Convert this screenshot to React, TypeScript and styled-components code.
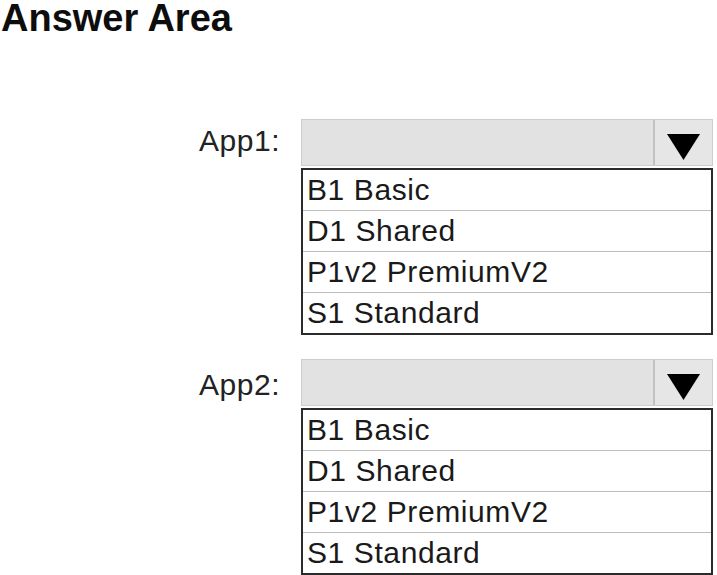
import styled, { createGlobalStyle } from 'styled-components';

const GlobalStyle = createGlobalStyle`
  html, body {
    margin: 0;
    padding: 0;
    background: #ffffff;
  }
  body {
    font-family: "Liberation Sans", Arimo, Arial, Helvetica, sans-serif;
  }
`;

const FONT = `"Liberation Sans", Arimo, Arial, Helvetica, sans-serif`;

const apps = [
  { name: 'App1', labelOffset: -2 },
  { name: 'App2', labelOffset: 2 },
];

const tiers = ['B1 Basic', 'D1 Shared', 'P1v2 PremiumV2', 'S1 Standard'];

function Caret() {
  return (
    <svg width="33" height="26" viewBox="0 0 33 26">
      <polygon points="0,0 33,0 16.5,26" fill="#000000" />
    </svg>
  );
}

export default function App() {
  return (
    <Page>
      <GlobalStyle />
      <Title>Answer Area</Title>
      <Blocks>
        {apps.map((app) => (
          <Block key={app.name}>
            <Label $offset={app.labelOffset}>{app.name}:</Label>
            <Dropdown>
              <Header>
                <Field />
                <ArrowCell>
                  <Caret />
                </ArrowCell>
              </Header>
              <List>
                {tiers.map((t) => (
                  <Option key={t}>{t}</Option>
                ))}
              </List>
            </Dropdown>
          </Block>
        ))}
      </Blocks>
    </Page>
  );
}

const Page = styled.div`
  width: 717px;
  height: 575px;
  overflow: hidden;
  color: #111111;
  font-family: ${FONT};
`;
const Title = styled.h1`
  margin: 0;
  padding-left: 1px;
  font-family: ${FONT};
  font-size: 38px;
  font-weight: bold;
  line-height: 36px;
  color: #0d0d0d;
`;
const Blocks = styled.div`
  display: flex;
  flex-direction: column;
  gap: 24px;
  margin-top: 83px;
`;
const Block = styled.div`
  display: flex;
  flex-direction: row;
  align-items: flex-start;
`;
const Label = styled.div<{ $offset: number }>`
  box-sizing: border-box;
  width: 301px;
  padding-right: 21px;
  margin-top: ${(p) => p.$offset}px;
  text-align: right;
  font-family: ${FONT};
  font-size: 30px;
  letter-spacing: 0.5px;
  line-height: 47px;
  color: #222222;
`;
const Dropdown = styled.div`
  width: 412px;
  display: flex;
  flex-direction: column;
  gap: 2px;
`;
const Header = styled.div`
  box-sizing: border-box;
  height: 47px;
  display: flex;
  flex-direction: row;
  background: #e2e2e2;
  border: 1px solid #cdcdcd;
`;
const Field = styled.div`
  flex: 1;
  border-right: 2px solid #c2c2c2;
`;
const ArrowCell = styled.div`
  width: 57px;
  display: flex;
  justify-content: center;
  align-items: flex-start;
  padding-top: 14px;
  background: #e6e6e6;
`;
const List = styled.div`
  border: 2px solid #2b2b2b;
  display: flex;
  flex-direction: column;
`;
const Option = styled.div`
  height: 40px;
  line-height: 40px;
  padding-left: 4px;
  font-family: ${FONT};
  font-size: 30px;
  letter-spacing: 0.6px;
  color: #1a1a1a;
  border-bottom: 1px solid #bdbdbd;
  &:last-child {
    border-bottom: none;
  }
`;
